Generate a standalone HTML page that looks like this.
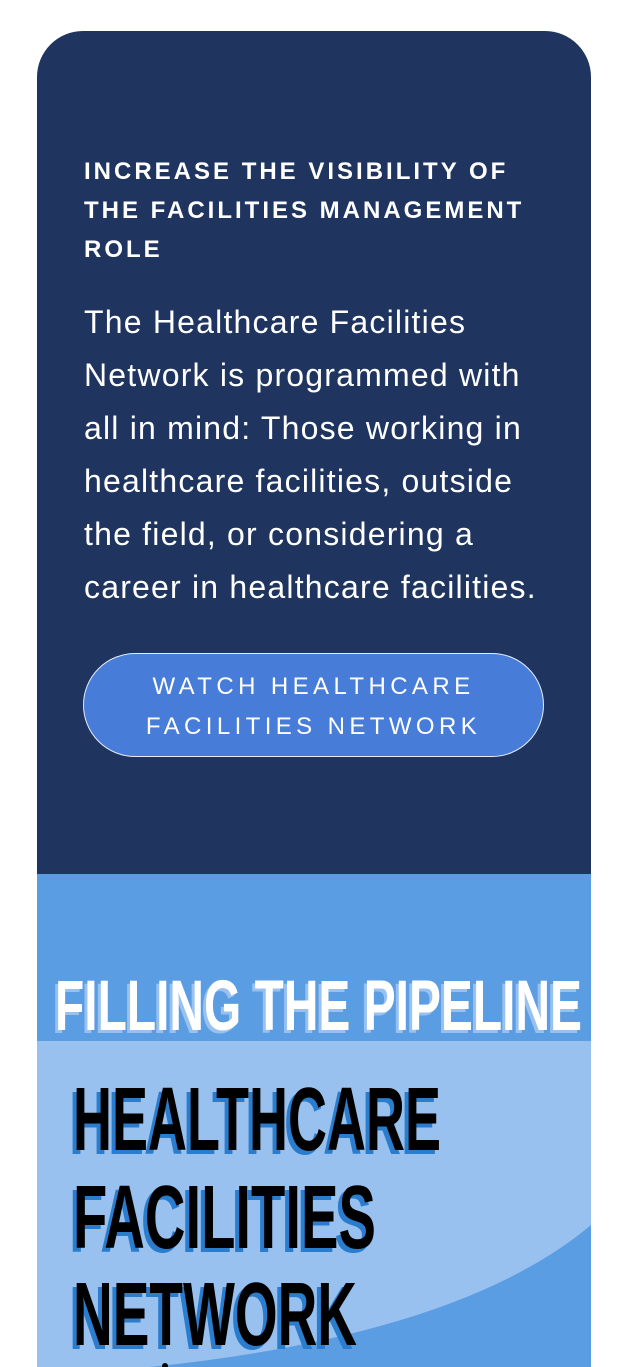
<!DOCTYPE html>
<html><head><meta charset="utf-8"><style>
html,body{margin:0;padding:0;background:#fff;width:631px;height:1367px;overflow:hidden;}
body{position:relative;font-family:"Liberation Sans",sans-serif;}
.card{position:absolute;left:37px;top:31px;width:554px;height:1336px;background:#1f3560;border-radius:46px 46px 0 0;overflow:hidden;}
.h{position:absolute;left:47px;top:121px;color:#fff;font-weight:bold;font-size:24px;line-height:39px;letter-spacing:3px;margin:0;}
.p{position:absolute;left:47px;top:265px;color:#fff;font-size:32px;line-height:53px;letter-spacing:1.2px;margin:0;white-space:nowrap;}
.btn{position:absolute;left:46px;top:622px;width:461px;height:104px;box-sizing:border-box;border:1.5px solid #e6ecf7;border-radius:52px;background:#477dd8;color:#fff;text-align:center;font-size:24px;letter-spacing:4.4px;line-height:40px;padding-top:13px;}
svg{position:absolute;left:0;top:0;}
</style></head><body>
<div class="card">
<p class="h">INCREASE THE VISIBILITY OF<br>THE FACILITIES MANAGEMENT<br>ROLE</p>
<p class="p">The Healthcare Facilities<br>Network is programmed with<br>all in mind: Those working in<br>healthcare facilities, outside<br>the field, or considering a<br>career in healthcare facilities.</p>
<div class="btn">WATCH HEALTHCARE<br>FACILITIES NETWORK</div>
</div>
<svg width="631" height="1367" viewBox="0 0 631 1367">
<rect x="37" y="874" width="554" height="493" fill="#5b9de2"/>
<rect x="37" y="1041" width="554" height="326" fill="#98c1ef"/>
<path d="M150 1367 Q 460 1335 591 1225 L591 1367 Z" fill="#5b9de2"/>
<g font-family="Liberation Sans" font-weight="bold">
<text x="52" y="1033" font-size="71" textLength="527" lengthAdjust="spacingAndGlyphs" fill="#98c1ef">FILLING THE PIPELINE</text>
<text x="55" y="1030" font-size="71" textLength="527" lengthAdjust="spacingAndGlyphs" fill="#fff">FILLING THE PIPELINE</text>
<g font-size="90">
<text x="69" y="1154" textLength="368" lengthAdjust="spacingAndGlyphs" fill="#2a7ccc">HEALTHCARE</text>
<text x="73" y="1150" textLength="368" lengthAdjust="spacingAndGlyphs" fill="#000">HEALTHCARE</text>
<text x="69" y="1252" textLength="303" lengthAdjust="spacingAndGlyphs" fill="#2a7ccc">FACILITIES</text>
<text x="73" y="1248" textLength="303" lengthAdjust="spacingAndGlyphs" fill="#000">FACILITIES</text>
<text x="69" y="1349" textLength="284" lengthAdjust="spacingAndGlyphs" fill="#2a7ccc">NETWORK</text>
<text x="73" y="1345" textLength="284" lengthAdjust="spacingAndGlyphs" fill="#000">NETWORK</text>
</g></g>
<circle cx="165" cy="1366" r="3" fill="#000"/>
</svg>
</body></html>
